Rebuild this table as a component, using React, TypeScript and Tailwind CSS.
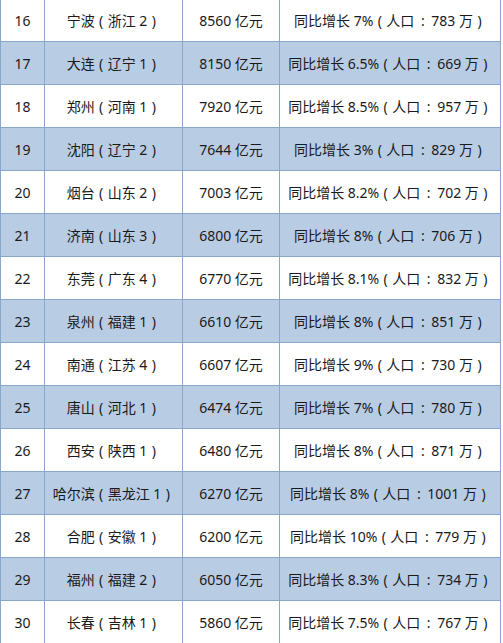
const rows = [
  ['16', '宁波（浙江 2）', '8560 亿元', '同比增长 7%（人口：783 万）'],
  ['17', '大连（辽宁 1）', '8150 亿元', '同比增长 6.5%（人口：669 万）'],
  ['18', '郑州（河南 1）', '7920 亿元', '同比增长 8.5%（人口：957 万）'],
  ['19', '沈阳（辽宁 2）', '7644 亿元', '同比增长 3%（人口：829 万）'],
  ['20', '烟台（山东 2）', '7003 亿元', '同比增长 8.2%（人口：702 万）'],
  ['21', '济南（山东 3）', '6800 亿元', '同比增长 8%（人口：706 万）'],
  ['22', '东莞（广东 4）', '6770 亿元', '同比增长 8.1%（人口：832 万）'],
  ['23', '泉州（福建 1）', '6610 亿元', '同比增长 8%（人口：851 万）'],
  ['24', '南通（江苏 4）', '6607 亿元', '同比增长 9%（人口：730 万）'],
  ['25', '唐山（河北 1）', '6474 亿元', '同比增长 7%（人口：780 万）'],
  ['26', '西安（陕西 1）', '6480 亿元', '同比增长 8%（人口：871 万）'],
  ['27', '哈尔滨（黑龙江 1）', '6270 亿元', '同比增长 8%（人口：1001 万）'],
  ['28', '合肥（安徽 1）', '6200 亿元', '同比增长 10%（人口：779 万）'],
  ['29', '福州（福建 2）', '6050 亿元', '同比增长 8.3%（人口：734 万）'],
  ['30', '长春（吉林 1）', '5860 亿元', '同比增长 7.5%（人口：767 万）'],
];

// full-width punctuation drawn as half-width glyphs centred in a box, like the YaHei source
const Cell = ({ text }: { text: string }) => (
  <>
    {text.split(/([（）：])/).map((part, k) => {
      if (part === '（') return <span key={k} className="inline-block w-[13px] text-center">(</span>;
      if (part === '）') return <span key={k} className="inline-block w-[13px] text-center">)</span>;
      if (part === '：') return <span key={k} className="inline-block w-[17px] text-center">:</span>;
      return <span key={k}>{part}</span>;
    })}
  </>
);

export default function App() {
  return (
    <div className="w-[503px] h-[643px] overflow-hidden bg-white">
      <div
        className="w-[501px] -mt-[1px] border-l border-[#8ba6cc] text-[14px] text-[#1a1a1a]"
        style={{ fontFamily: '"Noto Sans", "Noto Sans CJK SC", sans-serif' }}
      >
        {rows.map((r, i) => (
          <div
            key={r[0]}
            className={`grid grid-cols-[44px_138px_97px_221px] h-[43px] border-b border-[#8ba6cc] ${
              i % 2 === 1 ? 'bg-[#b8cce4]' : 'bg-white'
            }`}
          >
            {r.map((cell, j) => (
              <div key={j} className="flex items-center justify-center border-r border-[#8ba6cc] whitespace-nowrap">
                <span className="whitespace-pre">
                  <Cell text={cell} />
                </span>
              </div>
            ))}
          </div>
        ))}
      </div>
    </div>
  );
}
